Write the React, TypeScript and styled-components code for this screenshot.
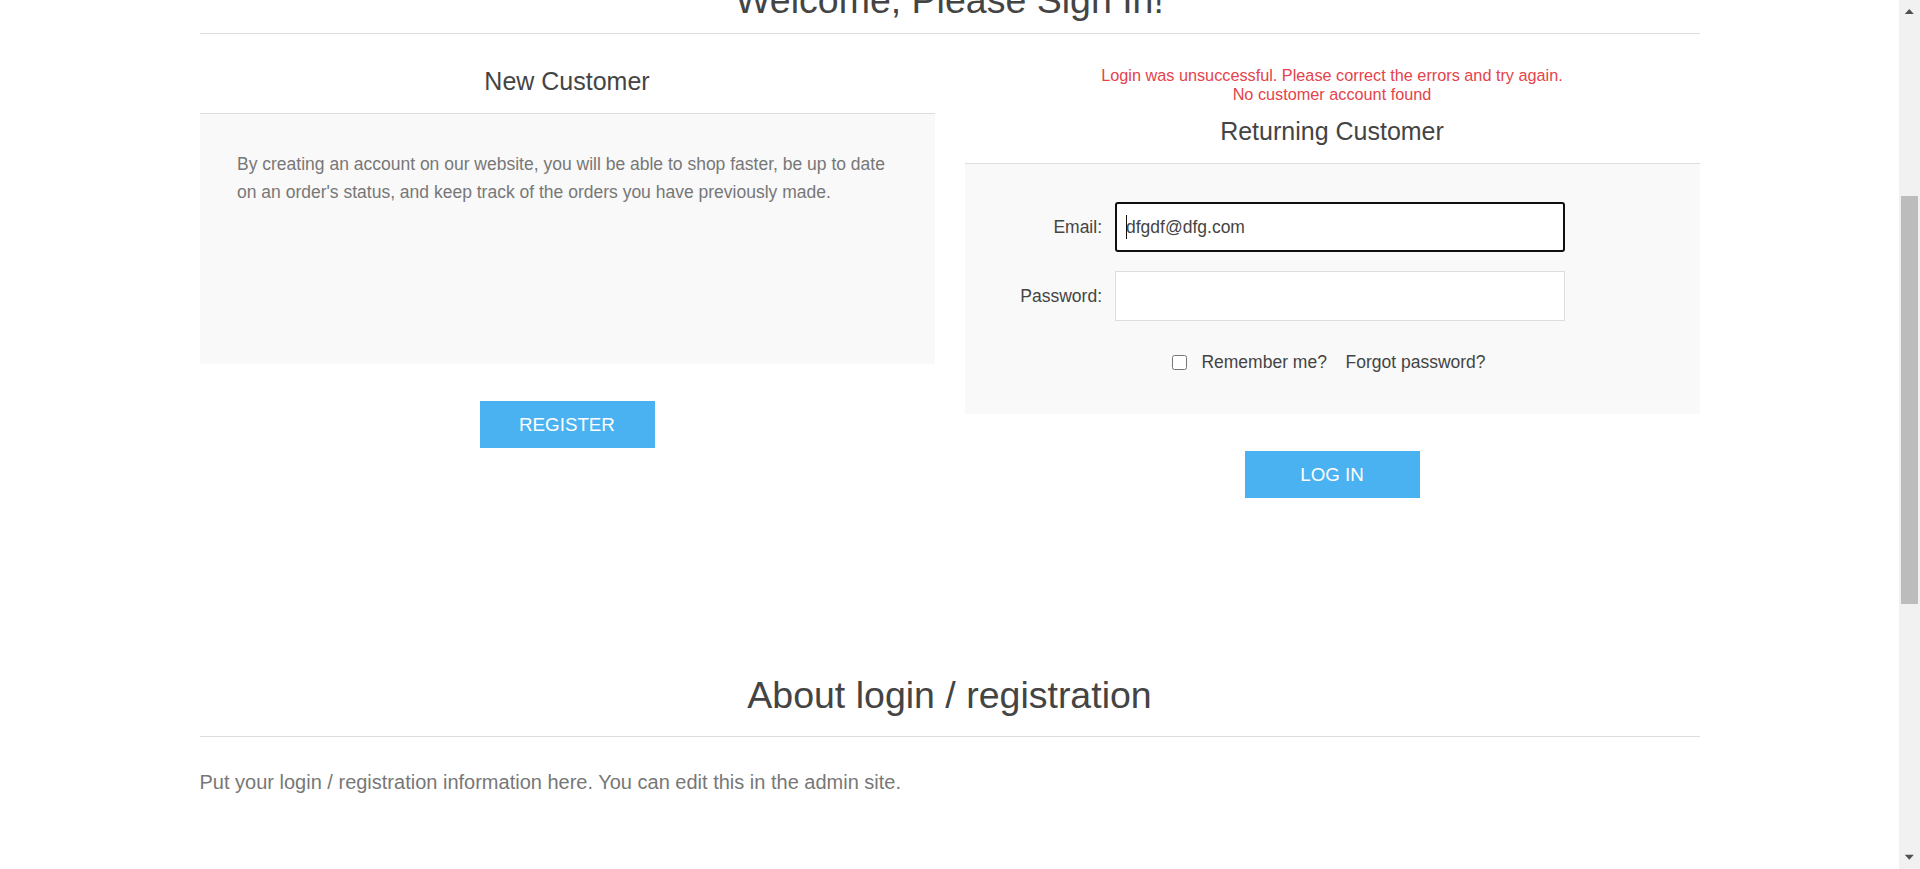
import React, { useLayoutEffect } from "react";
import styled, { createGlobalStyle } from "styled-components";

const SCROLL_TOP = 374;

const GlobalStyle = createGlobalStyle`
  *, *::before, *::after { box-sizing: border-box; }
  html, body { margin: 0; padding: 0; background: #fff; }
  html { scroll-behavior: auto; scrollbar-width: none; }
  body {
    font-family: "Liberation Sans", Arial, Helvetica, sans-serif;
    font-size: 17.5px;
    color: #777;
  }
`;

const MasterWrapper = styled.div`
  min-height: 1759px;
  padding-right: 21px;
  display: flex;
  flex-direction: column;
`;

const HeaderArea = styled.header`
  flex: none;
  height: 345px;
`;

const Center = styled.main`
  width: 1500px;
  margin: 0 auto;
`;

const PageTitle = styled.div`
  padding: 8px 12px 11px;
  border-bottom: 1px solid #ddd;
  text-align: center;
`;

const Heading = styled.h1`
  margin: 0;
  font-size: 37.5px;
  line-height: 43px;
  font-weight: normal;
  color: #444;
`;

const CustomerBlocks = styled.div`
  display: grid;
  grid-template-columns: 735px 735px;
  column-gap: 30px;
  align-items: start;
  margin-top: 32px;
`;

const Column = styled.section`
  display: flex;
  flex-direction: column;
`;

const ErrorMessage = styled.div`
  color: #e4434b;
  font-size: 16.25px;
  line-height: 19.3px;
  text-align: center;
  margin-bottom: 11.5px;
`;

const BlockTitle = styled.h2`
  margin: 0;
  padding: 1px 12px 17px;
  border-bottom: 1px solid #ddd;
  font-size: 25px;
  line-height: 29px;
  font-weight: normal;
  color: #444;
  text-align: center;
`;

const Panel = styled.div`
  min-height: 250px;
  background: #f9f9f9;
  padding: 37px 38px 37px 37.5px;
  line-height: 27.5px;
  color: #777;
`;

const FormPanel = styled(Panel)`
  padding: 38px 37.5px;
  line-height: normal;
`;

const Fields = styled.div`
  display: flex;
  flex-direction: column;
  gap: 19px;
`;

const FieldRow = styled.div`
  display: grid;
  grid-template-columns: 100px 450px;
  column-gap: 13px;
  align-items: center;
`;

const FieldLabel = styled.label`
  text-align: right;
  color: #444;
  font-size: 17.5px;
  white-space: nowrap;
`;

const InputBox = styled.div`
  position: relative;
  width: 450px;
`;

const TextInput = styled.input<{ $focused?: boolean }>`
  display: block;
  width: 450px;
  height: 50px;
  margin: 0;
  padding: 0 ${(p) => (p.$focused ? 9 : 10)}px;
  border: ${(p) => (p.$focused ? "2px solid #101010" : "1px solid #ddd")};
  border-radius: ${(p) => (p.$focused ? "3px" : "0")};
  background: #fff;
  font-family: inherit;
  font-size: 17.5px;
  color: #444;
  outline: none;
`;

const Caret = styled.span`
  position: absolute;
  left: 11px;
  top: 13px;
  width: 1px;
  height: 24px;
  background: #111;
`;

const RememberRow = styled.div`
  display: flex;
  justify-content: center;
  align-items: center;
  height: 22px;
  line-height: 22px;
  margin-top: 30px;
  padding-right: 6px;
  color: #444;
  font-size: 17.5px;
`;

const Checkbox = styled.input`
  width: 15px;
  height: 15px;
  margin: 0 14px 0 0;
`;

const ForgotLink = styled.a`
  margin-left: 18.6px;
  color: #444;
  text-decoration: none;
`;

const Buttons = styled.div`
  display: flex;
  justify-content: center;
  margin-top: 37px;
`;

const ActionButton = styled.button`
  min-width: 175px;
  height: 47px;
  padding: 0 37.5px;
  border: none;
  background: #4ab2f1;
  color: #fff;
  font-family: inherit;
  font-size: 18.75px;
  text-transform: uppercase;
  cursor: pointer;
`;

const TopicBlock = styled.section`
  margin-top: 167px;
`;

const TopicTitle = styled.div`
  padding: 9px 12px 19px;
  border-bottom: 1px solid #ddd;
  text-align: center;
`;

const TopicHeading = styled.h2`
  margin: 0;
  font-size: 37.5px;
  line-height: 43px;
  font-weight: normal;
  color: #444;
`;

const TopicBody = styled.div`
  margin-top: 30px;
  font-size: 20px;
  line-height: 30px;
  color: #777;
`;

/* Window scrollbar, drawn over the right edge of the viewport */
const ScrollbarRail = styled.div`
  position: fixed;
  top: 0;
  right: 0;
  bottom: 0;
  width: 21px;
  background: #f1f1f1;
  display: flex;
  flex-direction: column;
  z-index: 10;
`;

const ScrollArrow = styled.div`
  flex: none;
  height: 21px;
  display: flex;
  svg {
    display: block;
  }
`;

const ScrollTrack = styled.div`
  flex: 1;
  padding: 175px 2px 0;
`;

const ScrollThumb = styled.div`
  height: 408px;
  background: #bcbcbc;
`;

export default function App() {
  useLayoutEffect(() => {
    if ("scrollRestoration" in window.history) {
      window.history.scrollRestoration = "manual";
    }
    window.scrollTo(0, SCROLL_TOP);
    const id = requestAnimationFrame(() => window.scrollTo(0, SCROLL_TOP));
    return () => cancelAnimationFrame(id);
  }, []);

  return (
    <>
      <GlobalStyle />
      <MasterWrapper>
        <HeaderArea />
        <Center>
          <PageTitle>
            <Heading>Welcome, Please Sign In!</Heading>
          </PageTitle>
          <CustomerBlocks>
            <Column>
              <BlockTitle>New Customer</BlockTitle>
              <Panel>
                By creating an account on our website, you will be able to shop faster, be up to date
                on an order's status, and keep track of the orders you have previously made.
              </Panel>
              <Buttons>
                <ActionButton type="button">Register</ActionButton>
              </Buttons>
            </Column>
            <Column>
              <ErrorMessage>
                Login was unsuccessful. Please correct the errors and try again.
                <br />
                No customer account found
              </ErrorMessage>
              <BlockTitle>Returning Customer</BlockTitle>
              <FormPanel>
                <Fields>
                  <FieldRow>
                    <FieldLabel htmlFor="Email">Email:</FieldLabel>
                    <InputBox>
                      <TextInput id="Email" type="email" defaultValue="dfgdf@dfg.com" $focused />
                      <Caret />
                    </InputBox>
                  </FieldRow>
                  <FieldRow>
                    <FieldLabel htmlFor="Password">Password:</FieldLabel>
                    <InputBox>
                      <TextInput id="Password" type="password" />
                    </InputBox>
                  </FieldRow>
                </Fields>
                <RememberRow>
                  <Checkbox type="checkbox" id="RememberMe" />
                  <label htmlFor="RememberMe">Remember me?</label>
                  <ForgotLink href="#">Forgot password?</ForgotLink>
                </RememberRow>
              </FormPanel>
              <Buttons>
                <ActionButton type="button">Log in</ActionButton>
              </Buttons>
            </Column>
          </CustomerBlocks>
          <TopicBlock>
            <TopicTitle>
              <TopicHeading>About login / registration</TopicHeading>
            </TopicTitle>
            <TopicBody>
              Put your login / registration information here. You can edit this in the admin site.
            </TopicBody>
          </TopicBlock>
        </Center>
      </MasterWrapper>
      <ScrollbarRail aria-hidden="true">
        <ScrollArrow>
          <svg width="21" height="21" viewBox="0 0 21 21">
            <polygon points="5.8,14 10.3,9 14.8,14" fill="#505050" />
          </svg>
        </ScrollArrow>
        <ScrollTrack>
          <ScrollThumb />
        </ScrollTrack>
        <ScrollArrow>
          <svg width="21" height="21" viewBox="0 0 21 21">
            <polygon points="5.8,6.7 14.8,6.7 10.3,11.7" fill="#505050" />
          </svg>
        </ScrollArrow>
      </ScrollbarRail>
    </>
  );
}
